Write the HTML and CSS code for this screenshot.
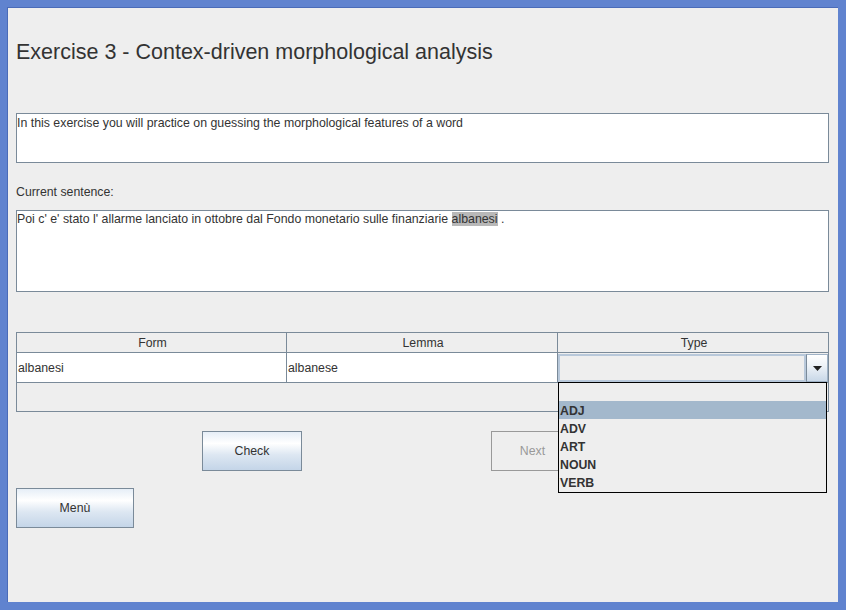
FILE: index.html
```html
<!DOCTYPE html>
<html>
<head>
<meta charset="utf-8">
<link rel="stylesheet" href="styles.css">
</head>
<body>
<div class="window">
  <h1 class="title">Exercise 3 - Contex-driven morphological analysis</h1>
  <div class="area area-intro">In this exercise you will practice on guessing the morphological features of a word</div>
  <div class="label">Current sentence:</div>
  <div class="area area-sentence">Poi c' e' stato l' allarme lanciato in ottobre dal Fondo monetario sulle finanziarie <span class="hl">albanesi</span> .</div>

  <div class="table">
    <div class="row head">
      <div class="cell c1">Form</div>
      <div class="cell c2">Lemma</div>
      <div class="cell c3">Type</div>
    </div>
    <div class="row data">
      <div class="cell c1">albanesi</div>
      <div class="cell c2">albanese</div>
      <div class="cell c3 combo-cell">
        <div class="combo">
          <div class="combo-field"></div>
          <div class="combo-btn"><svg width="9" height="5" viewBox="0 0 9 5"><path d="M0 0H9L4.5 5Z" fill="#222"/></svg></div>
        </div>
      </div>
    </div>
    <div class="empty"></div>
    <ul class="dropdown">
      <li class="item">&nbsp;</li>
      <li class="item sel">ADJ</li>
      <li class="item">ADV</li>
      <li class="item">ART</li>
      <li class="item">NOUN</li>
      <li class="item">VERB</li>
    </ul>
  </div>

  <div class="buttons">
    <button class="btn btn-check">Check</button>
    <button class="btn btn-next" disabled>Next</button>
  </div>
  <button class="btn btn-menu">Menù</button>
</div>
</body>
</html>
```

FILE: styles.css
```css
html, body {
  margin: 0;
  padding: 0;
}
body {
  width: 846px;
  height: 610px;
  background: #6083cf;
  padding: 7px 8px 8px 7px;
  box-sizing: border-box;
  font-family: "Liberation Sans", Arial, sans-serif;
  color: #333;
}
.window {
  width: 831px;
  height: 595px;
  box-sizing: border-box;
  border-top: 1px solid #4a6bb8;
  border-left: 1px solid #4a6bb8;
  background: #eeeeee;
  padding-left: 8px;
  overflow: hidden;
}
.title {
  margin: 31px 0 0 0;
  font-size: 21.5px;
  line-height: 26px;
  font-weight: normal;
  color: #333;
}
.area {
  background: #fff;
  border: 1px solid #7a8a99;
  box-sizing: border-box;
  width: 813px;
  font-size: 12.35px;
  line-height: 15px;
  color: #333;
}
.area-intro {
  margin-top: 48px;
  height: 50px;
  padding: 2px 0 0 0;
}
.label {
  margin-top: 22px;
  font-size: 12.3px;
  line-height: 15px;
  height: 15px;
}
.area-sentence {
  margin-top: 10px;
  height: 82px;
  padding: 1px 0 0 0;
}
.hl {
  background: #b8b8b8;
}
.table {
  position: relative;
  margin-top: 40px;
  width: 813px;
  height: 80px;
  box-sizing: border-box;
  border: 1px solid #7a8a99;
  font-size: 12.3px;
}
.row {
  display: flex;
  border-bottom: 1px solid #7a8a99;
  box-sizing: border-box;
}
.head {
  height: 20px;
}
.data {
  height: 30px;
  background: #fff;
}
.cell {
  box-sizing: border-box;
}
.c1 { width: 270px; border-right: 1px solid #7a8a99; }
.c2 { width: 271px; border-right: 1px solid #7a8a99; }
.c3 { width: 270px; }
.head .cell {
  text-align: center;
  line-height: 21px;
  padding-left: 2px;
}
.data .cell {
  line-height: 31px;
  padding-left: 1px;
}
.combo-cell {
  padding: 1px 0 0 0 !important;
  background: #eee;
}
.combo {
  display: flex;
  height: 28px;
  width: 270px;
  box-sizing: border-box;
}
.combo-field {
  flex: 1;
  border: 2px solid #b8c8da;
  background: #eeeeee;
}
.combo-btn {
  width: 22px;
  box-sizing: border-box;
  border: 1px solid #9fb2c6;
  border-left: 1px solid #7a8a99;
  background: linear-gradient(#ffffff 0%, #eef3f8 40%, #c9d8e8 100%);
  display: flex;
  align-items: center;
  justify-content: center;
}
.empty {
  height: 28px;
}
.dropdown {
  position: absolute;
  left: 541px;
  top: 49px;
  width: 269px;
  height: 111px;
  box-sizing: border-box;
  margin: 0;
  padding: 0;
  list-style: none;
  background: #eeeeee;
  border: 1px solid #000;
  z-index: 2;
}
.item {
  height: 18px;
  line-height: 20px;
  padding-left: 1px;
  font-weight: bold;
  font-size: 12.3px;
  color: #333;
}
.item.sel {
  background: #a3b8cc;
}
.buttons {
  display: flex;
  margin-top: 19px;
}
.btn {
  font-family: "Liberation Sans", Arial, sans-serif;
  font-size: 12.3px;
  color: #333;
  height: 40px;
  box-sizing: border-box;
  border: 1px solid #7a8a99;
  background: linear-gradient(#e6eef7 0%, #ffffff 30%, #dde7f2 60%, #c4d5e8 100%);
  padding: 0;
  margin: 0;
  display: block;
}
.btn-check {
  width: 100px;
  margin-left: 186px;
}
.btn-next {
  width: 83px;
  margin-left: 189px;
  background: #eeeeee;
  border-color: #999;
  color: #999;
}
.btn-menu {
  width: 118px;
  margin-top: 17px;
}
```
